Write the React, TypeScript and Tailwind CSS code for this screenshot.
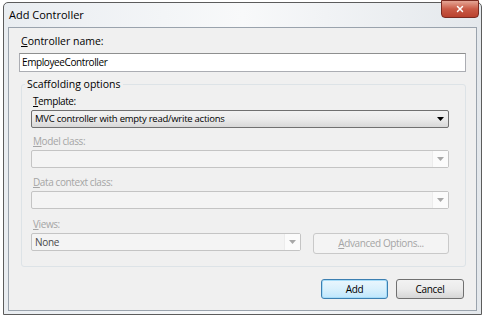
import { X } from 'lucide-react';

const font = { fontFamily: '"Open Sans", "Noto Sans", sans-serif' };

function Arrow({ disabled }: { disabled?: boolean }) {
  return (
    <svg width="7" height="4" viewBox="0 0 7 4" className="shrink-0">
      <path d="M0 0 H7 L3.5 4 Z" fill={disabled ? '#a8a8a8' : '#000'} />
    </svg>
  );
}

function Combo({ text, disabled, className = '' }: { text?: string; disabled?: boolean; className?: string }) {
  if (!disabled) {
    return (
      <div className={`h-[18px] flex items-center border border-[#707070] rounded-[2px] bg-gradient-to-b from-[#f2f2f2] via-[#ebebeb] to-[#d8d8d8] pl-[3px] pr-[4px] ${className}`}>
        <span className="flex-1 text-black leading-none text-[9.5px] tracking-[-0.25px]">{text}</span>
        <Arrow />
      </div>
    );
  }
  return (
    <div className={`h-[18px] flex items-center border border-[#c4c4c4] rounded-[2px] bg-[#f4f4f4] pl-[3px] ${className}`}>
      <span className="flex-1 text-[#4a4a4a] leading-none text-[10px] tracking-[-0.3px]">{text}</span>
      <div className="h-full w-[16px] flex items-center justify-center bg-[#fbfbfb] border-l border-[#ececec]">
        <Arrow disabled />
      </div>
    </div>
  );
}

function Label({ children, disabled }: { children: React.ReactNode; disabled?: boolean }) {
  return (
    <div className={`h-[14px] leading-[14px] pl-[2px] text-[10px] tracking-[-0.4px] ${disabled ? 'text-[#a5a5a5]' : 'text-black'}`}>{children}</div>
  );
}

export default function App() {
  return (
    <div className="w-[486px] h-[318px] bg-white overflow-hidden text-[10.5px]" style={font}>
      <div className="relative ml-[3px] mt-[2px] w-[479px] h-[313px] border border-[#5c5c5c] rounded-t-[5px] bg-gradient-to-r from-[#e9edf1] via-[#f8f9fa] to-[#e4e8ec] flex flex-col">
        <div className="h-[24px] flex items-center pl-[5px] text-[11px] text-black">Add Controller</div>
        <div className="absolute -top-[3px] right-[2px] w-[38px] h-[18px] rounded-b-[4px] border border-[#7a2a20] bg-gradient-to-b from-[#e4a595] via-[#c95a46] to-[#b9412e] flex items-center justify-center">
          <X className="w-[10px] h-[10px] text-white" strokeWidth={3.5} />
        </div>

        <div className="flex-1 mx-[4px] mb-[3px] border border-[#9aa3ad] bg-[#f0f0f0] px-[10px] pt-[6px] flex flex-col">
          <div className="h-[14px] leading-[14px] pl-[2px] text-black">
            <span className="underline">C</span>ontroller name:
          </div>
          <div className="mt-[5px] h-[19px] border border-[#abadb3] border-t-[#8e8f8f] bg-white flex items-center pl-[2px] text-black text-[10px] tracking-[-0.4px]">
            EmployeeController
          </div>

          <div className="relative mt-[12px] ml-[2px] h-[183px] border border-[#dde3e7] rounded-[3px] pl-[9px] pr-[16px] pt-[9px] flex flex-col">
            <div className="absolute -top-[8px] left-[3px] bg-[#f0f0f0] px-[2px] leading-[14px] text-black">Scaffolding options</div>
            <Label>
              <span className="underline">T</span>emplate:
            </Label>
            <Combo className="mt-[2px]" text="MVC controller with empty read/write actions" />
            <div className="mt-[6px]">
              <Label disabled>
                <span className="underline">M</span>odel class:
              </Label>
            </div>
            <Combo className="mt-[2px]" disabled />
            <div className="mt-[7px]">
              <Label disabled>
                <span className="underline">D</span>ata context class:
              </Label>
            </div>
            <Combo className="mt-[2px]" disabled />
            <div className="mt-[8px]">
              <Label disabled>
                <span className="underline">V</span>iews:
              </Label>
            </div>
            <div className="mt-[2px] flex items-start">
              <Combo className="w-[270px]" text="None" disabled />
              <div className="ml-auto w-[136px] h-[21px] border border-[#c9c9c9] rounded-[3px] bg-[#f4f4f4] flex items-center justify-center text-[#a5a5a5] text-[10px] tracking-[-0.4px]">
                <span>
                  <span className="underline">A</span>dvanced Options...
                </span>
              </div>
            </div>
          </div>

          <div className="mt-[12px] flex justify-end gap-[8px] pr-[2px] text-[10px] tracking-[-0.3px]">
            <div className="w-[67px] h-[20px] rounded-[3px] border border-[#3c7fb1] bg-gradient-to-b from-[#eaf6fd] via-[#d9f0fc] to-[#bee6fd] flex items-center justify-center text-black shadow-[inset_0_0_0_1px_#a6dcf8]">
              Add
            </div>
            <div className="w-[68px] h-[20px] rounded-[3px] border border-[#707070] bg-gradient-to-b from-[#f2f2f2] via-[#ebebeb] to-[#d6d6d6] flex items-center justify-center text-black">
              Cancel
            </div>
          </div>
        </div>
      </div>
    </div>
  );
}
